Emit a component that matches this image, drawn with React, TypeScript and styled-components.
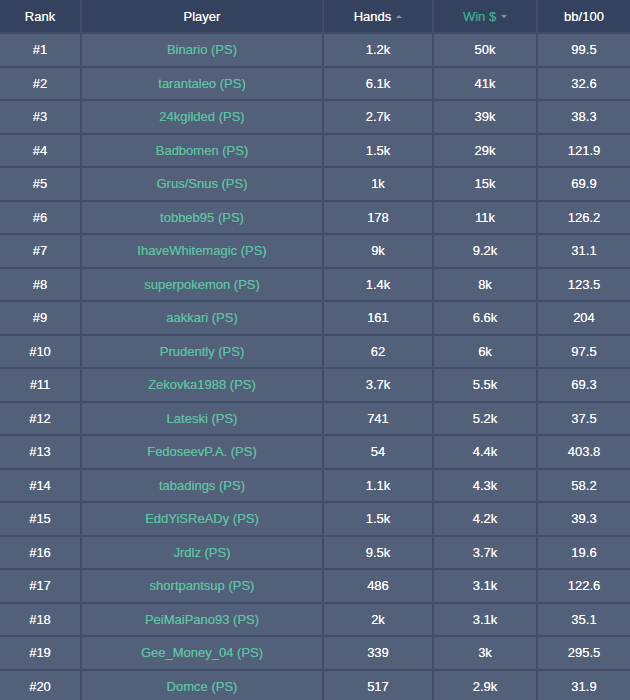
import styled, { createGlobalStyle } from 'styled-components';

const GlobalStyle = createGlobalStyle`
  body {
    margin: 0;
    background: #53607a;
    font-family: "Liberation Sans", Arial, sans-serif;
  }
`;

type Player = {
  rank: number;
  name: string;
  hands: string;
  win: string;
  bb: string;
};

const PLAYERS: Player[] = [
  { rank: 1, name: 'Binario', hands: '1.2k', win: '50k', bb: '99.5' },
  { rank: 2, name: 'tarantaleo', hands: '6.1k', win: '41k', bb: '32.6' },
  { rank: 3, name: '24kgilded', hands: '2.7k', win: '39k', bb: '38.3' },
  { rank: 4, name: 'Badbomen', hands: '1.5k', win: '29k', bb: '121.9' },
  { rank: 5, name: 'Grus/Snus', hands: '1k', win: '15k', bb: '69.9' },
  { rank: 6, name: 'tobbeb95', hands: '178', win: '11k', bb: '126.2' },
  { rank: 7, name: 'IhaveWhitemagic', hands: '9k', win: '9.2k', bb: '31.1' },
  { rank: 8, name: 'superpokemon', hands: '1.4k', win: '8k', bb: '123.5' },
  { rank: 9, name: 'aakkari', hands: '161', win: '6.6k', bb: '204' },
  { rank: 10, name: 'Prudently', hands: '62', win: '6k', bb: '97.5' },
  { rank: 11, name: 'Zekovka1988', hands: '3.7k', win: '5.5k', bb: '69.3' },
  { rank: 12, name: 'Lateski', hands: '741', win: '5.2k', bb: '37.5' },
  { rank: 13, name: 'FedoseevP.A.', hands: '54', win: '4.4k', bb: '403.8' },
  { rank: 14, name: 'tabadings', hands: '1.1k', win: '4.3k', bb: '58.2' },
  { rank: 15, name: 'EddYiSReADy', hands: '1.5k', win: '4.2k', bb: '39.3' },
  { rank: 16, name: 'Jrdlz', hands: '9.5k', win: '3.7k', bb: '19.6' },
  { rank: 17, name: 'shortpantsup', hands: '486', win: '3.1k', bb: '122.6' },
  { rank: 18, name: 'PeiMaiPano93', hands: '2k', win: '3.1k', bb: '35.1' },
  { rank: 19, name: 'Gee_Money_04', hands: '339', win: '3k', bb: '295.5' },
  { rank: 20, name: 'Domce', hands: '517', win: '2.9k', bb: '31.9' },
];

const Board = styled.div`
  display: flex;
  flex-direction: column;
  gap: 2px;
  width: 630px;
  background: #414d68;
`;

const Row = styled.div<{ $head?: boolean }>`
  display: grid;
  grid-template-columns: 80px 240px 108px 102px 92px;
  gap: 2px;
  height: ${(p) => (p.$head ? '32px' : '31.5px')};
  flex: none;
`;

const Cell = styled.div<{ $head?: boolean; $accent?: boolean }>`
  display: flex;
  align-items: center;
  justify-content: center;
  gap: 5px;
  font-size: 13px;
  background: ${(p) => (p.$head ? '#34425f' : '#53607a')};
  color: ${(p) => (p.$accent ? (p.$head ? '#3ba681' : '#5cc3a1') : '#ffffff')};
  text-shadow: ${(p) =>
    p.$accent ? '0 0 0.3px rgba(92,195,161,0.8)' : '0 0 0.6px rgba(255,255,255,0.85)'};
  white-space: nowrap;
`;

const SortArrow = styled.span<{ $dir: 'up' | 'down' }>`
  width: 0;
  height: 0;
  border-left: 3px solid transparent;
  border-right: 3px solid transparent;
  ${(p) =>
    p.$dir === 'up'
      ? 'border-bottom: 3px solid #8d97ab;'
      : 'border-top: 3px solid #8d97ab;'}
  margin-top: 1px;
`;

function App() {
  return (
    <>
      <GlobalStyle />
      <Board>
        <Row $head>
          <Cell $head>Rank</Cell>
          <Cell $head>Player</Cell>
          <Cell $head>
            Hands <SortArrow $dir="up" />
          </Cell>
          <Cell $head $accent>
            Win $ <SortArrow $dir="down" />
          </Cell>
          <Cell $head>bb/100</Cell>
        </Row>
        {PLAYERS.map((p) => (
          <Row key={p.rank}>
            <Cell>#{p.rank}</Cell>
            <Cell $accent>{p.name} (PS)</Cell>
            <Cell>{p.hands}</Cell>
            <Cell>{p.win}</Cell>
            <Cell>{p.bb}</Cell>
          </Row>
        ))}
      </Board>
    </>
  );
}

export default App;
